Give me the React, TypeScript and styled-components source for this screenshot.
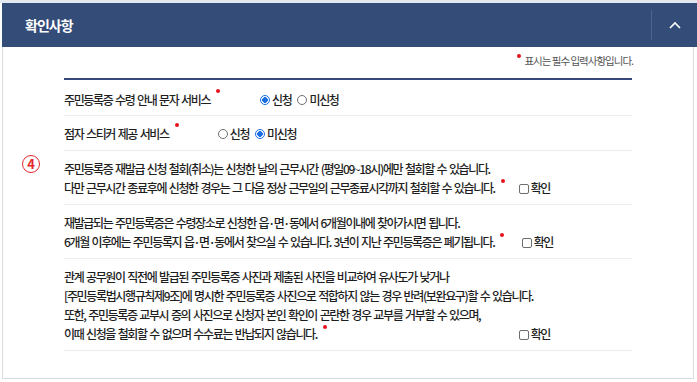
import styled, { createGlobalStyle } from "styled-components";

const GlobalStyle = createGlobalStyle`
  html, body {
    margin: 0;
    background: #ffffff;
  }
  body {
    font-family: "Noto Sans CJK KR", "Noto Sans", sans-serif;
    color: #222;
  }
`;

const SPage = styled.div`
  width: 697px;
  height: 382px;
  box-sizing: border-box;
  padding: 3px 0 0 2px;
  background: linear-gradient(#e4e9f0 0 3px, #ffffff 3px);
`;

const SHeader = styled.div`
  height: 44px;
  background: #344c78;
  display: flex;
  align-items: center;
  justify-content: space-between;
  padding-left: 23px;
`;

const STitle = styled.h2`
  margin: 0;
  font-size: 14px;
  font-weight: 700;
  letter-spacing: -1px;
  color: #ffffff;
`;

const SToggle = styled.button`
  width: 46px;
  height: 30px;
  border: 0;
  border-left: 1px solid #4b6391;
  background: transparent;
  display: flex;
  align-items: center;
  justify-content: center;
  padding: 0 0 0 1px;
`;

const SBody = styled.div`
  width: 692px;
  height: 332px;
  box-sizing: border-box;
  border: 1px solid #dcdcdc;
  border-top: 0;
  padding: 6px 0 0 61px;
`;

const SNotice = styled.p`
  width: 569px;
  margin: 0;
  text-align: right;
  font-size: 10.5px;
  letter-spacing: -1px;
  color: #555;
  line-height: 16px;
`;

const SDot = styled.span<{ $gap?: number; $flex?: boolean }>`
  display: inline-block;
  width: 4px;
  height: 4px;
  border-radius: 50%;
  background: #e4141c;
  vertical-align: top;
  align-self: flex-start;
  margin: ${(p) =>
    `${p.$flex ? -1 : 1}px ${p.$gap ?? 6}px 0 ${p.$gap ?? 6}px`};
`;

const SList = styled.div`
  width: 568px;
  margin-top: 9px;
  border-top: 2px solid #34497a;
`;

const SRow = styled.div<{ $pad?: string }>`
  position: relative;
  padding: ${(p) => p.$pad ?? "8px 0 7px"};
  border-bottom: 1px solid #ececec;
  font-size: 12px;
  font-weight: 500;
  letter-spacing: -1.36px;
  word-spacing: 1.3px;
  line-height: 19px;
  color: #1e1e1e;
`;

const SOptionLine = styled.div`
  display: flex;
  align-items: center;
  height: 19px;
`;

const SRadioGroup = styled.div<{ $offset: number }>`
  display: flex;
  align-items: center;
  margin-left: ${(p) => p.$offset}px;
  gap: 6px;
`;

const SOption = styled.label`
  display: flex;
  align-items: center;
  gap: 2px;
`;

const SRadio = styled.span<{ $on?: boolean }>`
  width: 10px;
  height: 10px;
  box-sizing: border-box;
  border-radius: 50%;
  border: 1px solid ${(p) => (p.$on ? "#1a6fe0" : "#6e6e6e")};
  background: ${(p) =>
    p.$on ? "radial-gradient(circle, #1a6fe0 0 2.6px, #fff 3px)" : "#fff"};
`;

const SLine = styled.div`
  white-space: nowrap;
`;

const SLastLine = styled.div<{ $width: number }>`
  display: flex;
  align-items: center;
  justify-content: space-between;
  width: ${(p) => p.$width}px;
  white-space: nowrap;
`;

const SCheck = styled.label`
  display: flex;
  align-items: center;
  gap: 2px;
`;

const SBox = styled.span`
  width: 10px;
  height: 10px;
  box-sizing: border-box;
  border: 1px solid #6e6e6e;
  border-radius: 2px;
  background: #fff;
  margin-top: 2px;
`;

const SMarker = styled.span`
  position: absolute;
  left: -42px;
  top: 4px;
  width: 18px;
  height: 18px;
  box-sizing: border-box;
  border: 1.5px solid #e3262b;
  border-radius: 50%;
  color: #e3262b;
  font-size: 13px;
  font-weight: 700;
  letter-spacing: 0;
  line-height: 15px;
  text-align: center;
`;

const Chevron = () => (
  <svg width="12" height="8" viewBox="0 0 12 8">
    <path d="M1 7 L6 2 L11 7" fill="none" stroke="#ffffff" strokeWidth="1.6" />
  </svg>
);

const Confirm = () => (
  <SCheck>
    <SBox />
    확인
  </SCheck>
);

const App = () => {
  return (
    <SPage>
      <GlobalStyle />
      <SHeader>
        <STitle>확인사항</STitle>
        <SToggle aria-label="접기">
          <Chevron />
        </SToggle>
      </SHeader>
      <SBody>
        <SNotice>
          <SDot $gap={3} />
          표시는 필수 입력사항입니다.
        </SNotice>
        <SList>
          <SRow $pad="10px 0 6px">
            <SOptionLine>
              주민등록증 수령 안내 문자 서비스
              <SDot $flex />
              <SRadioGroup $offset={34}>
                <SOption>
                  <SRadio $on />
                  신청
                </SOption>
                <SOption>
                  <SRadio />
                  미신청
                </SOption>
              </SRadioGroup>
            </SOptionLine>
          </SRow>
          <SRow $pad="8px 0 7px">
            <SOptionLine>
              점자 스티커 제공 서비스
              <SDot $flex />
              <SRadioGroup $offset={33}>
                <SOption>
                  <SRadio />
                  신청
                </SOption>
                <SOption>
                  <SRadio $on />
                  미신청
                </SOption>
              </SRadioGroup>
            </SOptionLine>
          </SRow>
          <SRow>
            <SMarker>4</SMarker>
            <SLine>
              주민등록증 재발급 신청 철회(취소)는 신청한 날의 근무시간 (평일09~18시)에만 철회할 수 있습니다.
            </SLine>
            <SLastLine $width={486}>
              <span>
                다만 근무시간 종료후에 신청한 경우는 그 다음 정상 근무일의 근무종료시각까지 철회할 수 있습니다.
                <SDot />
              </span>
              <Confirm />
            </SLastLine>
          </SRow>
          <SRow>
            <SLine>
              재발급되는 주민등록증은 수령장소로 신청한 읍·면·동에서 6개월이내에 찾아가시면 됩니다.
            </SLine>
            <SLastLine $width={489}>
              <span>
                6개월 이후에는 주민등록지 읍·면·동에서 찾으실 수 있습니다. 3년이 지난 주민등록증은 폐기됩니다.
                <SDot />
              </span>
              <Confirm />
            </SLastLine>
          </SRow>
          <SRow>
            <SLine>
              관계 공무원이 직전에 발급된 주민등록증 사진과 제출된 사진을 비교하여 유사도가 낮거나
            </SLine>
            <SLine>
              [주민등록법시행규칙제9조]에 명시한 주민등록증 사진으로 적합하지 않는 경우 반려(보완요구)할 수 있습니다.
            </SLine>
            <SLine>
              또한, 주민등록증 교부시 증의 사진으로 신청자 본인 확인이 곤란한 경우 교부를 거부할 수 있으며,
            </SLine>
            <SLastLine $width={486}>
              <span>
                이때 신청을 철회할 수 없으며 수수료는 반납되지 않습니다.
                <SDot />
              </span>
              <Confirm />
            </SLastLine>
          </SRow>
        </SList>
      </SBody>
    </SPage>
  );
};

export default App;
